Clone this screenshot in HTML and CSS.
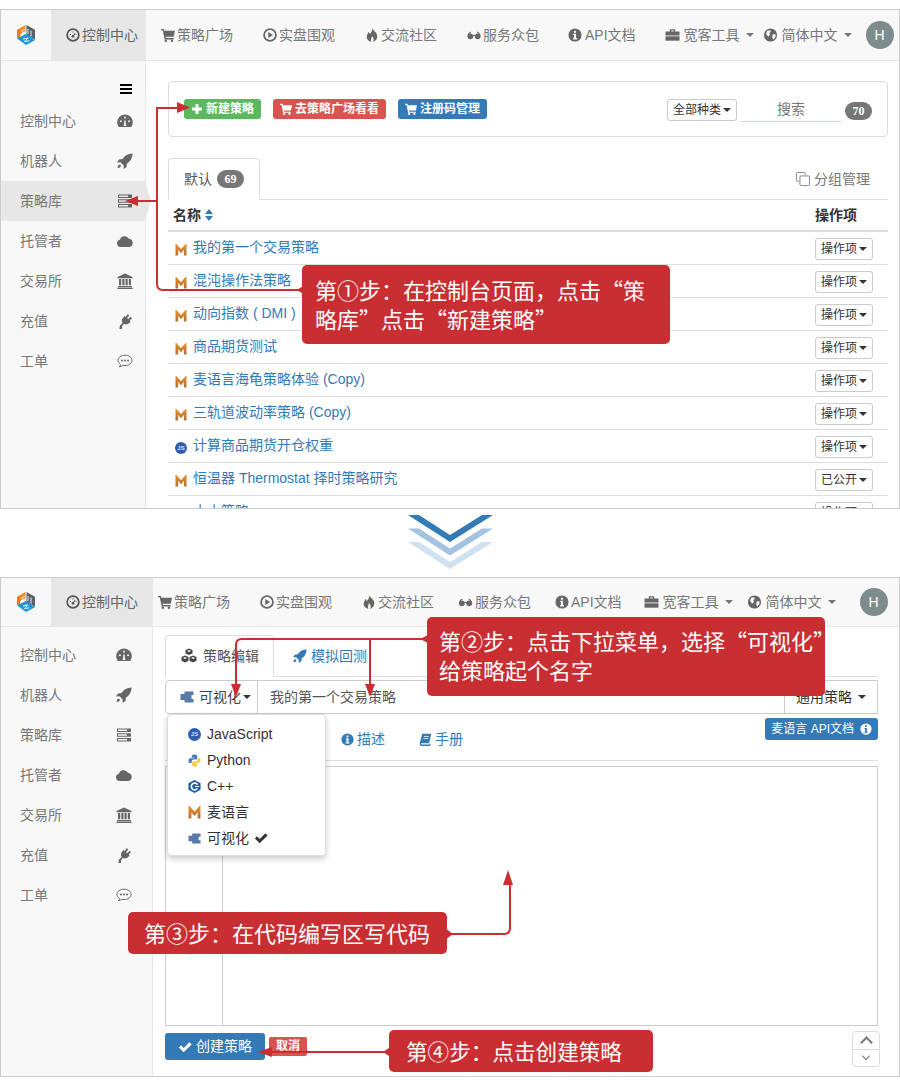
FILE: index.html
```html
<!DOCTYPE html>
<html lang="zh-CN">
<head>
<meta charset="utf-8">
<title>策略库</title>
<link rel="stylesheet" href="styles.css">
</head>
<body>
<svg class="sprite" width="0" height="0">
  <defs><linearGradient id="mg" gradientUnits="userSpaceOnUse" x1="0" y1="2" x2="0" y2="12"><stop offset="0" stop-color="#e5872a"/><stop offset="1" stop-color="#a9703a"/></linearGradient></defs>
  <symbol id="i-logo" viewBox="0 0 18 20"><path d="M8.500 0L0 4.800V11l8.500-4.800z" fill="#f08a24"/><path d="M0 5v7.500l3.200 1.900V5z" fill="#ea7a1c"/><path d="M9.500 0L18 4.800v10L9.500 10z" fill="#59626c"/><path d="M0 13.500L9 8.800l9 6.400L9 20z" fill="#1d9ad6"/><path d="M4 6.500l4-2.200M4 9l3-1.700M11 4v5M14 5.500v6M6 14l5-1-3.500 3.500 5-.7" stroke="#fff" stroke-width=".9" fill="none"/></symbol>
  <symbol id="i-clock" viewBox="0 0 16 16"><circle cx="8" cy="8" r="6.700" fill="none" stroke="currentColor" stroke-width="2"/><circle cx="8" cy="9.500" r="1.500" fill="currentColor"/><path d="M8 9.500l2.500-3.500M4.500 7.500h1.200M7.400 4.500h1.200M11 7.500h.8" stroke="currentColor" stroke-width="1.200" fill="none"/></symbol>
  <symbol id="i-cart" viewBox="0 0 16 16"><path d="M0 1h3.200l.6 2H16l-1.500 7H5.300l.3 1.500H14.500V13H4.200L2 2.500H0z" fill="currentColor"/><circle cx="5.500" cy="14.500" r="1.400" fill="currentColor"/><circle cx="12.500" cy="14.500" r="1.400" fill="currentColor"/></symbol>
  <symbol id="i-play" viewBox="0 0 16 16"><circle cx="8" cy="8" r="6.800" fill="none" stroke="currentColor" stroke-width="2"/><path d="M6 4.500l5.500 3.500L6 11.500z" fill="currentColor"/></symbol>
  <symbol id="i-fire" viewBox="0 0 16 16"><path d="M8 0c.8 3 5.500 4.500 6 9 .3 3.500-2.500 6-5 7 1.500-2 1.500-4-1-7-.5 2.500-1.800 4-.8 7C4 15.200 1.500 12.500 2 9.500 2.400 7 3.500 6.500 4 4.500 5 5.500 5.500 6 5.500 7 7.500 5 8.500 3 8 0z" fill="currentColor"/></symbol>
  <symbol id="i-glasses" viewBox="0 0 16 16"><circle cx="3.800" cy="9.500" r="3.300" fill="currentColor"/><circle cx="12.200" cy="9.500" r="3.300" fill="currentColor"/><path d="M1 8.500Q2 5 4.500 4.500M15 8.500Q14 5 11.500 4.500M6 9q2-1.500 4 0" stroke="currentColor" stroke-width="1.200" fill="none"/></symbol>
  <symbol id="i-info" viewBox="0 0 16 16"><path fill-rule="evenodd" d="M8 .5a7.500 7.500 0 1 0 0 15A7.500 7.500 0 1 0 8 .5zM6.800 3h2.400v2.300H6.800zM6 6.500h3.200v5H10.300V13H5.800v-1.500h1v-3.500H6z" fill="currentColor"/></symbol>
  <symbol id="i-brief" viewBox="0 0 16 16"><path fill-rule="evenodd" d="M5 1.500h6V4h5V8.500H0V4h5zM6.500 2.800V4h3V2.800z" fill="currentColor"/><rect y="9.500" width="16" height="5" fill="currentColor"/></symbol>
  <symbol id="i-globe" viewBox="0 0 16 16"><circle cx="8" cy="8" r="7.500" fill="currentColor"/><path d="M4 3l3.500-.5 1 1.500-2 2 1 1.500L5.500 10 3 7zM10.500 7l3.500.5-.5 3-2.500 3-1-3z" fill="#f8f8f8"/></symbol>
  <symbol id="i-dash" viewBox="0 0 16 16"><path fill-rule="evenodd" d="M1.800 14A7.800 7.800 0 1 1 14.200 14zM7.200 3.800v1.800h1.600V3.800zM3 7.500v1.600h1.800V7.500zM11.200 7.500v1.600H13V7.500zM7.400 7.500l-.4 4.200-.6 1.300h3.200l-.6-1.300-.4-4.200z" fill="currentColor"/></symbol>
  <symbol id="i-rocket" viewBox="0 0 16 16"><path d="M15.500.5c-4.500 0-8 2.200-10 5.500L2 6.500 0 9.500l3.500-.2L6.700 12.500l-.2 3.500 3-2 .5-3.500C13.300 8.500 15.500 5 15.500.5zM1 12.500c1-1 2-1 2.500-.5s.5 1.500-.5 2.500l-2.500.5z" fill="currentColor"/></symbol>
  <symbol id="i-server" viewBox="0 0 16 16"><path fill-rule="evenodd" d="M1 1.500h14v3.500H1zM2 2.500v1.500h9V2.500zM1 6.200h14v3.500H1zM2 7.200v1.500h9V7.200zM1 11h14v3.500H1zM2 12v1.500h9V12z" fill="currentColor"/></symbol>
  <symbol id="i-cloud" viewBox="0 0 16 16"><path d="M3.800 14a3.700 3.700 0 0 1-.9-7.300A5 5 0 0 1 12 5.700a4.200 4.200 0 0 1 .2 8.300z" fill="currentColor"/></symbol>
  <symbol id="i-bank" viewBox="0 0 16 16"><path d="M8 .5l7.500 3.500v1.200H.5V4zM2 6h2.200v6.200H2zM5.300 6h2.200v6.200H5.300zM8.500 6h2.200v6.200H8.500zM11.800 6H14v6.200h-2.200zM1 13h14v1.200H1zM.3 14.700h15.400V16H.3z" fill="currentColor"/></symbol>
  <symbol id="i-plug" viewBox="0 0 16 16"><path d="M10.800 1l1.500 1.500L10 5l1.200 1.200 2.300-2.500L15 5.200l-2.300 2.400 1 1-1.200 1.200c-1.700 1.800-4 2-5.700 1L5 13.500 5 16H2.500l.3-3.200 2.700-2.800c-1-1.700-.8-4 1-5.700l1.200-1.200 1 1z" fill="currentColor"/></symbol>
  <symbol id="i-comment" viewBox="0 0 16 16"><path d="M8 2.200c-3.900 0-7 2.300-7 5.200 0 1.600 1 3 2.500 4-.1.900-.5 1.700-1.200 2.400 1.300-.1 2.500-.7 3.400-1.500.7.200 1.500.3 2.300.3 3.900 0 7-2.300 7-5.200S11.900 2.200 8 2.200z" fill="none" stroke="currentColor"/><circle cx="5" cy="7.500" r="1" fill="currentColor"/><circle cx="8" cy="7.500" r="1" fill="currentColor"/><circle cx="11" cy="7.500" r="1" fill="currentColor"/></symbol>
  <symbol id="i-plus" viewBox="0 0 16 16"><path d="M6 1.500h4V6h4.500v4H10v4.500H6V10H1.500V6H6z" fill="currentColor"/></symbol>
  <symbol id="i-check" viewBox="0 0 16 16"><path d="M1 8.500l2.500-2.500 3 3L13 2.500 15.500 5l-9 9z" fill="currentColor"/></symbol>
  <symbol id="i-m" viewBox="0 0 12 12"><path d="M1.800 11.500V2.500L6 7.200l4.200-4.700v9" fill="none" stroke="url(#mg)" stroke-width="2.600"/></symbol>
  <symbol id="i-py" viewBox="0 0 14 14"><path d="M7 .5C4.500.5 4 1.500 4 2.500V4h3.200v.6H2.500C1 4.600.5 5.800.5 7.200S1 9.800 2.500 9.800H4V8c0-1.200 1-2 2-2h2.500C9.500 6 10 5.300 10 4.500v-2C10 1.300 9 .5 7 .5z" fill="#3f7fbd"/><path d="M7 13.500c2.500 0 3-1 3-2V10H6.800v-.6h4.700c1.500 0 2-1.200 2-2.600s-.5-2.600-2-2.600H10.500V6c0 1.200-1 2-2 2H6C5 8 4.500 8.700 4.500 9.500v2c0 1.200.5 2 2.500 2z" fill="#f6c93f"/></symbol>
  <symbol id="i-cpp" viewBox="0 0 14 14"><path d="M7 0l6.500 3.500v7L7 14 .5 10.500v-7z" fill="#1c5c9e"/><path d="M10.200 5A3.600 3.600 0 1 0 10.200 9" fill="none" stroke="#fff" stroke-width="1.800"/><path d="M7.500 7h4.500" stroke="#fff" stroke-width="1.200"/></symbol>
  <symbol id="i-puzzle" viewBox="0 0 14 14"><path d="M4.500 1.500h9v3.500h-2v4h2v3.500h-9V10H.5V4h4z" fill="#577aa9"/></symbol>
  <symbol id="i-cubes" viewBox="0 0 16 16"><path d="M8 .5l3.500 1.500v3.500L8 7 4.500 5.500V2zM4 7.500L7.500 9v3.700L4 14.500.5 12.700V9zM12 7.500L15.500 9v3.700L12 14.500l-3.500-1.800V9z" fill="#444"/><path d="M8 2l2 1-2 1-2-1zM4 9l2 1-2 1-2-1zM12 9l2 1-2 1-2-1z" fill="#fff"/></symbol>
  <symbol id="i-book" viewBox="0 0 16 16"><path fill-rule="evenodd" d="M4 1h11l-2.500 11.500H3.200c-.8 0-1 1.500 0 1.500H13l1-1 .5 1-1 2H3C1 16 .5 14 1 12zM6 4v1h6V4zM5.500 6.500v1h6v-1z" fill="currentColor"/></symbol>
  <symbol id="i-copy" viewBox="0 0 16 16"><path d="M10.500 3.500v-2a1 1 0 0 0-1-1h-8a1 1 0 0 0-1 1v8a1 1 0 0 0 1 1h2" fill="none" stroke="currentColor"/><rect x="4.500" y="4.500" width="11" height="11" rx="1" fill="none" stroke="currentColor"/></symbol>
  <symbol id="i-bars" viewBox="0 0 12 10"><path d="M0 0h12v2H0zM0 4h12v2H0zM0 8h12v2H0z" fill="#000"/></symbol>
  <symbol id="i-sort" viewBox="0 0 8 12"><path d="M4 0l4 5H0zM4 12l4-5H0z" fill="#337ab7"/></symbol>
</svg>

<main class="page">
  <section class="shot shot-list">
    <nav class="topbar">
      <div class="brand"><svg class="logo"><use href="#i-logo"/></svg></div>
      <a class="nav-item active"><svg class="ic"><use href="#i-clock"/></svg>控制中心</a>
      <a class="nav-item"><svg class="ic"><use href="#i-cart"/></svg>策略广场</a>
      <a class="nav-item"><svg class="ic"><use href="#i-play"/></svg>实盘围观</a>
      <a class="nav-item"><svg class="ic"><use href="#i-fire"/></svg>交流社区</a>
      <a class="nav-item"><svg class="ic"><use href="#i-glasses"/></svg>服务众包</a>
      <a class="nav-item"><svg class="ic"><use href="#i-info"/></svg>API文档</a>
      <a class="nav-item drop"><svg class="ic"><use href="#i-brief"/></svg>宽客工具<i class="caret"></i></a>
      <a class="nav-item drop"><svg class="ic"><use href="#i-globe"/></svg>简体中文<i class="caret"></i></a>
      <span class="avatar">H</span>
    </nav>
    <div class="body">
      <aside class="sidebar">
        <div class="side-toggle"><svg class="bars"><use href="#i-bars"/></svg></div>
        <a class="side-item"><span>控制中心</span><svg class="ic-s"><use href="#i-dash"/></svg></a>
        <a class="side-item"><span>机器人</span><svg class="ic-s"><use href="#i-rocket"/></svg></a>
        <a class="side-item current"><span>策略库</span><svg class="ic-s"><use href="#i-server"/></svg></a>
        <a class="side-item"><span>托管者</span><svg class="ic-s"><use href="#i-cloud"/></svg></a>
        <a class="side-item"><span>交易所</span><svg class="ic-s"><use href="#i-bank"/></svg></a>
        <a class="side-item"><span>充值</span><svg class="ic-s"><use href="#i-plug"/></svg></a>
        <a class="side-item"><span>工单</span><svg class="ic-s"><use href="#i-comment"/></svg></a>
      </aside>
      <div class="content">
        <div class="toolbar">
          <a class="btn-s green"><svg class="ic-b"><use href="#i-plus"/></svg>新建策略</a>
          <a class="btn-s red"><svg class="ic-b"><use href="#i-cart"/></svg>去策略广场看看</a>
          <a class="btn-s blue"><svg class="ic-b"><use href="#i-cart"/></svg>注册码管理</a>
          <div class="filters">
            <a class="btn-line">全部种类<i class="caret dark"></i></a>
            <span class="search">搜索</span>
            <span class="badge">70</span>
          </div>
        </div>
        <div class="tabs">
          <a class="tab">默认<span class="badge">69</span></a>
          <a class="group-link"><svg class="ic"><use href="#i-copy"/></svg>分组管理</a>
        </div>
        <div class="thead"><span class="th-name">名称<svg class="sort"><use href="#i-sort"/></svg></span><span class="th-op">操作项</span></div>
        <div class="row"><svg class="lang"><use href="#i-m"/></svg><a class="name">我的第一个交易策略</a><a class="btn-line">操作项<i class="caret dark"></i></a></div>
        <div class="row"><svg class="lang"><use href="#i-m"/></svg><a class="name">混沌操作法策略</a><a class="btn-line">操作项<i class="caret dark"></i></a></div>
        <div class="row"><svg class="lang"><use href="#i-m"/></svg><a class="name">动向指数 ( DMI )</a><a class="btn-line">操作项<i class="caret dark"></i></a></div>
        <div class="row"><svg class="lang"><use href="#i-m"/></svg><a class="name">商品期货测试</a><a class="btn-line">操作项<i class="caret dark"></i></a></div>
        <div class="row"><svg class="lang"><use href="#i-m"/></svg><a class="name">麦语言海龟策略体验 (Copy)</a><a class="btn-line">操作项<i class="caret dark"></i></a></div>
        <div class="row"><svg class="lang"><use href="#i-m"/></svg><a class="name">三轨道波动率策略 (Copy)</a><a class="btn-line">操作项<i class="caret dark"></i></a></div>
        <div class="row"><span class="js lang">JS</span><a class="name">计算商品期货开仓权重</a><a class="btn-line">操作项<i class="caret dark"></i></a></div>
        <div class="row"><svg class="lang"><use href="#i-m"/></svg><a class="name">恒温器 Thermostat 择时策略研究</a><a class="btn-line">已公开<i class="caret dark"></i></a></div>
        <div class="row"><svg class="lang"><use href="#i-m"/></svg><a class="name">小小策略</a><a class="btn-line">操作项<i class="caret dark"></i></a></div>
      </div>
    </div>
  </section>

  <div class="divider">
    <svg class="chevrons" viewBox="0 0 85 54">
      <path d="M0 27h11l31 20 32-20h11L42 54z" fill="#d0e1f0"/>
      <path d="M0 13.500h11l31 20 32-20h11L42 40.500z" fill="#a3c3e0"/>
      <path d="M0 0h11l31 20L74 0h11L42 27z" fill="#337ab7"/>
    </svg>
  </div>

  <section class="shot shot-edit">
    <nav class="topbar">
      <div class="brand"><svg class="logo"><use href="#i-logo"/></svg></div>
      <a class="nav-item active"><svg class="ic"><use href="#i-clock"/></svg>控制中心</a>
      <a class="nav-item"><svg class="ic"><use href="#i-cart"/></svg>策略广场</a>
      <a class="nav-item"><svg class="ic"><use href="#i-play"/></svg>实盘围观</a>
      <a class="nav-item"><svg class="ic"><use href="#i-fire"/></svg>交流社区</a>
      <a class="nav-item"><svg class="ic"><use href="#i-glasses"/></svg>服务众包</a>
      <a class="nav-item"><svg class="ic"><use href="#i-info"/></svg>API文档</a>
      <a class="nav-item drop"><svg class="ic"><use href="#i-brief"/></svg>宽客工具<i class="caret"></i></a>
      <a class="nav-item drop"><svg class="ic"><use href="#i-globe"/></svg>简体中文<i class="caret"></i></a>
      <span class="avatar">H</span>
    </nav>
    <div class="body">
      <aside class="sidebar">
        <a class="side-item"><span>控制中心</span><svg class="ic-s"><use href="#i-dash"/></svg></a>
        <a class="side-item"><span>机器人</span><svg class="ic-s"><use href="#i-rocket"/></svg></a>
        <a class="side-item"><span>策略库</span><svg class="ic-s"><use href="#i-server"/></svg></a>
        <a class="side-item"><span>托管者</span><svg class="ic-s"><use href="#i-cloud"/></svg></a>
        <a class="side-item"><span>交易所</span><svg class="ic-s"><use href="#i-bank"/></svg></a>
        <a class="side-item"><span>充值</span><svg class="ic-s"><use href="#i-plug"/></svg></a>
        <a class="side-item"><span>工单</span><svg class="ic-s"><use href="#i-comment"/></svg></a>
      </aside>
      <div class="content">
        <div class="edit-tabs">
          <a class="etab on"><svg class="ic-c"><use href="#i-cubes"/></svg>策略编辑</a>
          <a class="etab"><svg class="ic"><use href="#i-rocket"/></svg>模拟回测</a>
        </div>
        <div class="input-group">
          <div class="lang-select">
            <svg class="ic-p"><use href="#i-puzzle"/></svg>可视化<i class="caret dark"></i>
            <ul class="menu">
              <li><span class="js ic-m">JS</span>JavaScript</li>
              <li><svg class="ic-m"><use href="#i-py"/></svg>Python</li>
              <li><svg class="ic-m"><use href="#i-cpp"/></svg>C++</li>
              <li><svg class="ic-m"><use href="#i-m"/></svg>麦语言</li>
              <li><svg class="ic-m"><use href="#i-puzzle"/></svg>可视化<svg class="ic-k"><use href="#i-check"/></svg></li>
            </ul>
          </div>
          <div class="name-input">我的第一个交易策略</div>
          <div class="type-select">通用策略<i class="caret dark wide"></i></div>
        </div>
        <div class="sub-tabs">
          <a class="sub-link"><svg class="ic"><use href="#i-info"/></svg>描述</a>
          <a class="sub-link"><svg class="ic"><use href="#i-book"/></svg>手册</a>
          <a class="api-btn">麦语言 API文档<svg class="ic-i"><use href="#i-info"/></svg></a>
        </div>
        <div class="editor"><div class="gutter"></div></div>
        <div class="actions">
          <a class="btn-create"><svg class="ic"><use href="#i-check"/></svg>创建策略</a>
          <a class="btn-cancel">取消</a>
          <div class="stepper"><span class="up"></span><span class="down"></span></div>
        </div>
      </div>
    </div>
  </section>

  <svg class="arrows" viewBox="0 0 900 1086">
    <g fill="none" stroke="#c92e33" stroke-width="2">
      <path d="M300 290H163q-6 0-6-6V108H180"/>
      <path d="M157 201H135"/>
      <path d="M425 639H242q-6 0-6 6v40M370 639v46"/>
      <path d="M448 934H504q6 0 6-6V882"/>
      <path d="M386 1052H270"/>
    </g>
    <g fill="#c92e33">
      <path d="M177 102l13 5.500-13 5.500zM138 196l-13 5 13 5z"/>
      <path d="M306 284l-9 6 9 6z"/>
      <path d="M231 684h10l-5 13zM365 684h10l-5 13z"/>
      <path d="M430 634l-10 5 10 5z"/>
      <path d="M445 928l8 6-8 6z"/>
      <path d="M503 885l5-15 5 15z"/>
      <path d="M392 1046l-9 6 9 6z"/>
      <path d="M272 1047l-14 5 14 5z"/>
    </g>
  </svg>
  <div class="callout c1">第①步：在控制台页面，点击“策<br>略库”点击“新建策略”</div>
  <div class="callout c2">第②步：点击下拉菜单，选择“可视化”<br>给策略起个名字</div>
  <div class="callout c3">第③步：在代码编写区写代码</div>
  <div class="callout c4">第④步：点击创建策略</div>
</main>
</body>
</html>
```
FILE: styles.css
```css
* { box-sizing: border-box; }
html, body { margin: 0; padding: 0; background: #fff; }
body { font: 14px/20px "Liberation Sans", "Noto Sans CJK SC", sans-serif; color: #333; }
a { color: inherit; text-decoration: none; }
.sprite { position: absolute; }
.js { display: inline-flex; align-items: center; justify-content: center; border-radius: 50%; background: #2f5fae; color: #d8e2f2; font: bold 6px/1 "Liberation Sans", sans-serif; flex: none; }

.page { position: relative; width: 900px; height: 1086px; padding-top: 9px; overflow: hidden; }
.shot { height: 500px; border: 1px solid #ccc; display: flex; flex-direction: column; overflow: hidden; background: #fff; }
.divider { height: 68px; display: flex; justify-content: center; padding-top: 6px; }
.chevrons { width: 85px; height: 54px; }

/* top navigation */
.topbar { display: flex; align-items: center; background: #f8f8f8; border-bottom: 1px solid #e7e7e7; color: #777; flex: none; }
.shot-list .topbar { height: 51px; }
.shot-edit .topbar { height: 49px; }
.brand { width: 50px; height: 100%; display: flex; align-items: center; padding-left: 16px; }
.logo { width: 18px; height: 20px; }
.nav-item { display: flex; align-items: center; height: 100%; white-space: nowrap; }
.nav-item .ic { margin-right: 2px; color: #666; }
.nav-item.active { background: #e7e7e7; padding-left: 15px; color: #666; }
.nav-item.active .ic { color: #555; }
.shot-list .nav-item.active { width: 95px; }
.shot-edit .nav-item.active { width: 102px; }
.ic { width: 14px; height: 14px; flex: none; }
.caret { display: inline-block; width: 0; height: 0; border-top: 4px solid #777; border-left: 4px solid transparent; border-right: 4px solid transparent; margin-left: 6px; }
.caret.dark { border-top-color: #333; margin-left: 2px; }
.caret.dark.wide { margin-left: 6px; }
.avatar { width: 28px; height: 28px; border-radius: 50%; background: #7f8c8d; color: #fff; display: flex; align-items: center; justify-content: center; font-size: 14px; }

.shot-list .nav-item:nth-child(3) { margin-left: 15px; }
.shot-list .nav-item:nth-child(4) { margin-left: 30px; }
.shot-list .nav-item:nth-child(5) { margin-left: 30px; }
.shot-list .nav-item:nth-child(6) { margin-left: 30px; }
.shot-list .nav-item:nth-child(7) { margin-left: 29px; }
.shot-list .nav-item:nth-child(7) .ic { margin-right: 3px; }
.shot-list .nav-item:nth-child(8) { margin-left: 29px; }
.shot-list .nav-item:nth-child(9) { margin-left: 9px; }
.shot-list .avatar { margin-left: 14px; }
.shot-edit .nav-item:nth-child(3) { margin-left: 5px; }
.shot-edit .nav-item:nth-child(4) { margin-left: 30px; }
.shot-edit .nav-item:nth-child(5) { margin-left: 30px; }
.shot-edit .nav-item:nth-child(6) { margin-left: 24px; }
.shot-edit .nav-item:nth-child(7) { margin-left: 24px; }
.shot-edit .nav-item:nth-child(8) { margin-left: 22px; }
.shot-edit .nav-item:nth-child(9) { margin-left: 14px; }
.shot-edit .avatar { margin-left: 24px; }
.nav-item.drop .ic { margin-right: 4px; width: 15px; }
.shot-edit .nav-item:nth-child(6) .ic { width: 15px; margin-right: 2px; }

/* layout */
.body { display: flex; flex: 1; min-height: 0; }
.sidebar { flex: none; background: #f8f8f8; border-right: 1px solid #e7e7e7; color: #777; }
.shot-list .sidebar { width: 145px; }
.shot-edit .sidebar { width: 152px; padding-top: 8px; }
.side-toggle { height: 40px; display: flex; justify-content: flex-end; align-items: flex-end; padding: 0 13px 7px 0; }
.bars { width: 12px; height: 10px; }
.side-item { position: relative; display: flex; justify-content: space-between; align-items: center; height: 40px; padding: 0 12px 0 19px; }
.shot-edit .side-item { padding-right: 20px; }
.side-item.current { background: #e7e7e7; }
.side-item.current::after { content: ""; position: absolute; left: 100%; top: 0; border-top: 20px solid transparent; border-bottom: 20px solid transparent; border-left: 6px solid #e7e7e7; }
.ic-s { width: 16px; height: 16px; color: #666; }
.content { flex: 1; min-width: 0; }
.shot-list .content { padding: 20px 11px 0 22px; }
.shot-edit .content { padding: 8px 21px 0 12px; }

/* list page */
.toolbar { display: flex; align-items: flex-start; height: 56px; padding: 17px 15px 0; border: 1px solid #ddd; border-radius: 4px; }
.btn-s { display: flex; align-items: center; height: 20px; padding: 0 7px; border-radius: 3px; color: #fff; font-size: 12px; font-weight: bold; margin-right: 12px; white-space: nowrap; }
.ic-b { width: 12px; height: 12px; margin-right: 3px; }
.green { background: #5cb85c; }
.red { background: #d9534f; }
.blue { background: #337ab7; margin-right: 0; }
.filters { margin-left: auto; display: flex; align-items: flex-start; }
.btn-line { display: flex; align-items: center; height: 22px; padding: 0 5px; border: 1px solid #ccc; border-radius: 3px; font-size: 12px; color: #333; background: #fff; white-space: nowrap; flex: none; }
.search { width: 100px; height: 23px; margin-left: 4px; border-bottom: 1px solid #c9d6ee; text-align: center; color: #777; line-height: 21px; }
.badge { display: inline-flex; align-items: center; justify-content: center; width: 27px; height: 18px; border-radius: 9px; background: #777; color: #fff; font: bold 12px "Liberation Serif", serif; }
.filters .badge { margin: 3px 0 0 4px; }
.tabs { display: flex; justify-content: space-between; margin-top: 21px; height: 42px; border-bottom: 1px solid #ddd; }
.tab { display: flex; align-items: center; height: 42px; width: 92px; padding-left: 15px; border: 1px solid #ddd; border-bottom-color: #fff; border-radius: 4px 4px 0 0; color: #555; }
.tab .badge { margin-left: 5px; }
.group-link { display: flex; align-items: center; gap: 4px; height: 41px; padding: 0 18px 0 0; color: #777; }
.thead { display: flex; justify-content: space-between; align-items: center; height: 32px; border-bottom: 2px solid #ddd; font-weight: bold; padding: 0 31px 0 5px; }
.th-name { display: flex; align-items: center; }
.sort { width: 8px; height: 12px; margin-left: 4px; }
.row { display: flex; align-items: center; height: 33px; border-bottom: 1px solid #ddd; padding: 0 15px 0 7px; }
.row .btn-line { margin-top: 1px; }
.lang { width: 12px; height: 12px; margin-right: 6px; margin-top: 3px; flex: none; }
.name { color: #337ab7; flex: 1; white-space: nowrap; margin-top: -2px; }

/* edit page */
.edit-tabs { display: flex; height: 42px; border-bottom: 1px solid #ddd; color: #337ab7; }
.etab { display: flex; align-items: center; height: 42px; padding: 0 15px; gap: 4px; white-space: nowrap; }
.etab.on { width: 109px; padding: 0 0 0 15px; gap: 6px; border: 1px solid #ddd; border-bottom-color: #fff; border-radius: 4px 4px 0 0; color: #555; }
.etab:not(.on) { padding-left: 19px; }
.ic-c { width: 16px; height: 16px; }
.input-group { display: flex; height: 34px; margin-top: 3px; border: 1px solid #ccc; border-radius: 4px 0 0 4px; color: #555; }
.lang-select { position: relative; width: 92px; display: flex; align-items: center; padding-left: 14px; border-right: 1px solid #ccc; color: #444; }
.ic-p { width: 14px; height: 14px; margin-right: 5px; }
.name-input { flex: 1; padding-left: 12px; line-height: 32px; }
.type-select { width: 93px; padding-left: 11px; border-left: 1px solid #ccc; color: #333; display: flex; align-items: center; }
.menu { position: absolute; z-index: 2; left: 1px; top: 33px; width: 159px; height: 142px; margin: 0; padding: 6px 0; list-style: none; background: #fff; border: 1px solid #ddd; border-radius: 4px; box-shadow: 0 3px 6px rgba(0,0,0,.2); }
.menu li { display: flex; align-items: center; height: 26px; padding-left: 20px; color: #333; }
.ic-m { width: 13px; height: 13px; margin-right: 6px; flex: none; }
.ic-k { width: 14px; height: 14px; margin-left: 5px; color: #333; }
.sub-tabs { display: flex; align-items: center; height: 47px; padding-left: 176px; border-bottom: 1px solid #ddd; position: relative; }
.sub-link { display: flex; align-items: center; gap: 3px; color: #337ab7; margin-right: 34px; margin-top: 4px; }
.sub-link .ic { width: 13px; height: 13px; }
.api-btn { margin-left: auto; margin-top: -16px; display: flex; align-items: center; height: 22px; padding: 0 6px; background: #337ab7; border-radius: 3px; color: #fff; font-size: 12px; white-space: nowrap; }
.ic-i { width: 12px; height: 12px; margin-left: 6px; }
.editor { display: flex; height: 260px; margin-top: 5px; border: 1px solid #ccc; }
.gutter { width: 57px; border-right: 1px solid #ccc; }
.actions { display: flex; align-items: flex-start; margin-top: 7px; }
.btn-create { display: flex; align-items: center; gap: 4px; width: 100px; height: 27px; padding-left: 13px; background: #337ab7; border-radius: 3px; color: #fff; line-height: 25px; }
.btn-cancel { margin: 4px 0 0 4px; width: 38px; height: 19px; text-align: center; line-height: 19px; background: #d9534f; border-radius: 2px; color: #fff; font-size: 12px; font-weight: bold; }
.stepper { margin: -2px -2px 0 auto; width: 28px; height: 36px; border: 1px solid #ddd; border-radius: 4px; display: flex; flex-direction: column; }
.stepper span { flex: 1; display: flex; align-items: center; justify-content: center; }
.stepper .up { border-bottom: 1px solid #ddd; }
.stepper .up::before { content: ""; width: 7px; height: 7px; margin-top: 5px; border-top: 2.5px solid #777; border-left: 2.5px solid #777; transform: rotate(45deg); }
.stepper .down::before { content: ""; width: 5px; height: 5px; margin-top: -3px; border-bottom: 1px solid #777; border-right: 1px solid #777; transform: rotate(45deg); }

/* annotations */
.arrows { position: absolute; left: 0; top: 0; width: 900px; height: 1086px; z-index: 3; pointer-events: none; }
.callout { position: absolute; z-index: 4; background: #c92e33; color: #fff; border-radius: 5px; font: 22px/29px "Noto Sans CJK SC", sans-serif; white-space: nowrap; }
.c1 { left: 302px; top: 265px; width: 368px; height: 79px; padding: 10px 0 0 13px; }
.c2 { left: 427px; top: 617px; width: 398px; height: 79px; padding: 9px 0 0 12px; }
.c3 { left: 128px; top: 912px; width: 319px; height: 42px; padding: 6px 0 0 16px; }
.c4 { left: 389px; top: 1030px; width: 264px; height: 42px; padding: 6px 0 0 17px; font-size: 21.6px; }
```
